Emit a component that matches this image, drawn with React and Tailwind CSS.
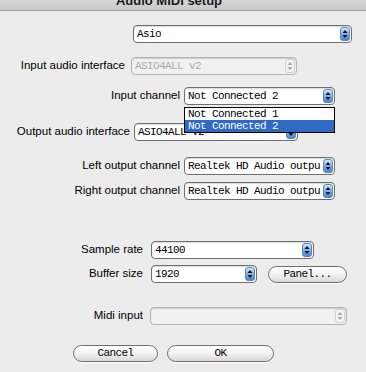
import React from "react";

const LABEL = "font-['Liberation_Sans',Arial,sans-serif] text-[11.5px] text-black whitespace-nowrap";
const MONO = "font-['Liberation_Mono','Courier_New',monospace] text-[11px] tracking-[-0.6px]";

function Arrows({ disabled }) {
  return (
    <svg width="10" height="14" viewBox="0 0 10 14" className="shrink-0">
      <defs>
        <linearGradient id="aq" x1="0" y1="0" x2="0" y2="1">
          <stop offset="0" stopColor="#dbe9f8" />
          <stop offset="0.5" stopColor="#7fb0e8" />
          <stop offset="1" stopColor="#3f83d6" />
        </linearGradient>
      </defs>
      {disabled ? (
        <rect x="0.5" y="0.5" width="9" height="13" rx="2.5" fill="#f4f4f4" stroke="#cfcfcf" />
      ) : (
        <rect x="0.5" y="0.5" width="9" height="13" rx="2.5" fill="url(#aq)" stroke="#5b86c0" />
      )}
      <path d="M5 3 L7.5 6 L2.5 6 Z" fill={disabled ? "#a8a8a8" : "#111"} />
      <path d="M5 11 L7.5 8 L2.5 8 Z" fill={disabled ? "#a8a8a8" : "#111"} />
    </svg>
  );
}

function Select({ value, width, disabled }) {
  return (
    <div
      className={
        "h-[18px] flex items-center justify-between rounded-[4px] border pl-[3px] pr-[1px] shadow-[inset_0_1px_1px_rgba(0,0,0,0.15)] " +
        (disabled ? "bg-[#f1f1f1] border-[#b4b4b4]" : "bg-white border-[#6f6f6f]")
      }
      style={{ width }}
    >
      <span className={MONO + " overflow-hidden whitespace-nowrap " + (disabled ? "text-[#a9a9a9]" : "text-black")}>
        {value}
      </span>
      <Arrows disabled={disabled} />
    </div>
  );
}

function Button({ children, width }) {
  return (
    <div
      className="h-[17px] flex items-center justify-center rounded-full border border-[#6e6e6e] bg-gradient-to-b from-white via-[#f2f2f2] to-[#d8d8d8] shadow-[0_1px_0_rgba(255,255,255,0.8)]"
      style={{ width }}
    >
      <span className={MONO + " text-black"}>{children}</span>
    </div>
  );
}

function Row({ label, labelWidth, pr, mt, children }) {
  return (
    <div className="flex items-center" style={{ marginTop: mt }}>
      <div className={LABEL + " text-right"} style={{ width: labelWidth, paddingRight: pr }}>
        {label}
      </div>
      {children}
    </div>
  );
}

export default function App() {
  return (
    <div className="relative w-[366px] h-[372px] overflow-hidden bg-[#ececec]">
      <div className="h-[11px] overflow-hidden border-b border-[#9c9c9c] bg-gradient-to-b from-[#d6d6d6] to-[#c9c9c9]">
        <div className="mt-[-6px] text-center pr-[28px] font-['Liberation_Sans',Arial,sans-serif] font-bold text-[13px] leading-[13px] text-[#1a1a1a]">
          Audio MIDI setup
        </div>
      </div>

      <div className="flex flex-col">
        <div className="flex mt-[14px] ml-[133px]">
          <Select value="Asio" width={219} />
        </div>
        <Row label="Input audio interface" labelWidth={131} pr={6} mt={14}>
          <Select value="ASIO4ALL v2" width={166} disabled />
        </Row>
        <Row label="Input channel" labelWidth={184} pr={4} mt={12}>
          <Select value="Not Connected 2" width={151} />
        </Row>
        <Row label="Output audio interface" labelWidth={134} pr={4} mt={18}>
          <Select value="ASIO4ALL v2" width={164} />
        </Row>
        <Row label="Left output channel" labelWidth={184} pr={4} mt={16}>
          <Select value="Realtek HD Audio outpu" width={151} />
        </Row>
        <Row label="Right output channel" labelWidth={184} pr={4} mt={7}>
          <Select value="Realtek HD Audio outpu" width={151} />
        </Row>
        <Row label="Sample rate" labelWidth={151} pr={8} mt={41}>
          <Select value="44100" width={163} />
        </Row>
        <Row label="Buffer size" labelWidth={151} pr={8} mt={6}>
          <Select value="1920" width={106} />
          <div className="ml-[11px]">
            <Button width={79}>Panel...</Button>
          </div>
        </Row>
        <Row label="Midi input" labelWidth={150} pr={7} mt={24}>
          <Select value="" width={197} disabled />
        </Row>
        <div className="flex mt-[20px] ml-[73px] gap-[9px]">
          <Button width={85}>Cancel</Button>
          <Button width={107}>OK</Button>
        </div>
      </div>

      <div className={"absolute left-[184px] top-[107px] w-[151px] border border-black bg-white " + MONO}>
        <div className="h-[12px] leading-[12px] pl-[3px] text-black">Not Connected 1</div>
        <div className="h-[12px] leading-[12px] pl-[3px] bg-[#316ac5] text-white">Not Connected 2</div>
      </div>
    </div>
  );
}
